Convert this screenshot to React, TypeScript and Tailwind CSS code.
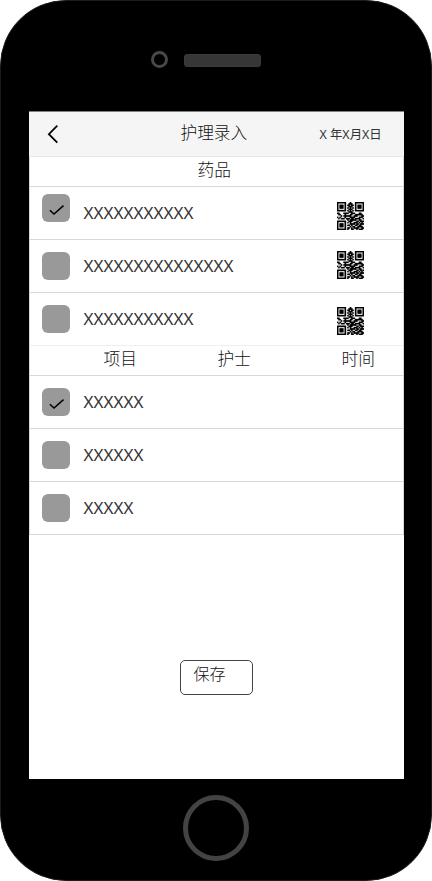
const QR_ROWS = [
  '111111100010001111111',
  '100000100111001000001',
  '101110101101101011101',
  '101110100111001011101',
  '101110101010101011101',
  '100000100111001000001',
  '111111101010101111111',
  '000000000111000000000',
  '110001111001110001100',
  '011000100011001111110',
  '000101111110011100011',
  '101000100011110001110',
  '010111011101101111001',
  '000000001011111001100',
  '111111100111000110111',
  '100000101010011101010',
  '101110100011110110111',
  '101110101101001101100',
  '101110100010110011110',
  '100000101101011110011',
  '111111101001100101110',
];

const QR_PATH = QR_ROWS.map((row, y) =>
  row
    .split('')
    .map((c, x) => (c === '1' ? `M${x} ${y}h1v1h-1z` : ''))
    .join('')
).join('');

function QrCode({ className }: { className: string }) {
  return (
    <svg className={`h-7 w-[27px] shrink-0 ${className}`} viewBox="0 0 21 21" preserveAspectRatio="none">
      <path d={QR_PATH} fill="#000" stroke="#000" strokeWidth="0.22" />
    </svg>
  );
}

function CheckBox({ checked, className = 'mt-3' }: { checked?: boolean; className?: string }) {
  return (
    <span className={`block size-7 shrink-0 rounded-[6px] bg-[#999] ${className}`}>
      {checked && (
        <svg viewBox="0 0 28 28" className="size-7" fill="none" stroke="#000" strokeWidth="1.5">
          <path d="M7.9 16.2 12 20.1 21.5 11.6" />
        </svg>
      )}
    </span>
  );
}

type RowProps = { text: string; checked?: boolean; box?: string; qr?: string; last?: boolean };

function Row({ text, checked, box, qr, last }: RowProps) {
  return (
    <div className={`flex h-[53px] items-start border-b pl-3 ${last ? 'border-[#eee]' : 'border-[#d7d7d7]'}`}>
      <CheckBox checked={checked} className={box} />
      <span className="mt-[14px] ml-[14px] flex-1 text-[17px] leading-6 tracking-[0.04px]">{text}</span>
      {qr && <QrCode className={qr} />}
    </div>
  );
}

export default function App() {
  return (
    <div className="flex h-[881px] w-[432px] flex-col items-center rounded-[66px] border border-[#1c1c1c] bg-black font-['Noto_Sans','Noto_Sans_CJK_SC',sans-serif] text-[#333]">
      <div className="flex h-[110px] w-full shrink-0 items-start pt-[50px] pl-[150px]">
        <span className="size-[17px] rounded-full border-[3px] border-[#484848]" />
        <span className="mt-[3px] ml-[16px] h-[13px] w-[77px] rounded-[3px] border border-[#3b3b3b] bg-[#363636]" />
      </div>

      <main className="h-[668px] w-[375px] shrink-0 bg-white">
        <header className="flex h-[46px] items-start border-t border-b border-t-[#808080] border-b-[#e8e8e8] bg-[#f5f5f5]">
          <svg className="mt-[12px] ml-[18px] h-5 w-3" viewBox="0 0 12 20" fill="none" stroke="#000" strokeWidth="1.8">
            <path d="M10.3 1.7 1.9 10.2 10.3 18.7" />
          </svg>
          <h1 className="mt-[9px] ml-[122px] w-[68px] text-[16.7px] leading-6 font-light whitespace-nowrap text-[#111]">护理录入</h1>
          <span className="mt-[13px] ml-[71px] text-[12.4px] leading-5 whitespace-nowrap">X 年X月X日</span>
        </header>

        <div className="border-x border-b border-[#d7d7d7]">
          <div className="flex h-[30px] items-start border-b border-[#d7d7d7] pt-px pl-[168px] text-[16.7px] leading-6 font-light text-[#111]">
            药品
          </div>
          <Row text="XXXXXXXXXXX" checked box="mt-[7px]" qr="mt-[15px] mr-[39px]" />
          <Row text="XXXXXXXXXXXXXXX" qr="mt-[11px] mr-[39px]" />
          <Row text="XXXXXXXXXXX" qr="mt-[14px] mr-[39px]" last />
          <div className="flex h-[30px] items-start border-b border-[#d7d7d7] pt-px text-[16.7px] leading-6 font-light text-[#111]">
            <span className="ml-[74px] w-[114px]">项目</span>
            <span className="w-[124px]">护士</span>
            <span>时间</span>
          </div>
          <Row text="XXXXXX" checked />
          <Row text="XXXXXX" />
          <div className="-mb-px">
            <Row text="XXXXX" />
          </div>
        </div>

        <button className="mt-[125px] ml-[151px] flex h-[35px] w-[73px] items-start rounded-[5px] border border-[#444] pt-[1px] pl-[13px] text-[16px] leading-6 font-light text-[#111]">
          保存
        </button>
      </main>

      <span className="mt-[16px] size-[66px] shrink-0 rounded-full border-[5px] border-[#434343]" />
    </div>
  );
}
